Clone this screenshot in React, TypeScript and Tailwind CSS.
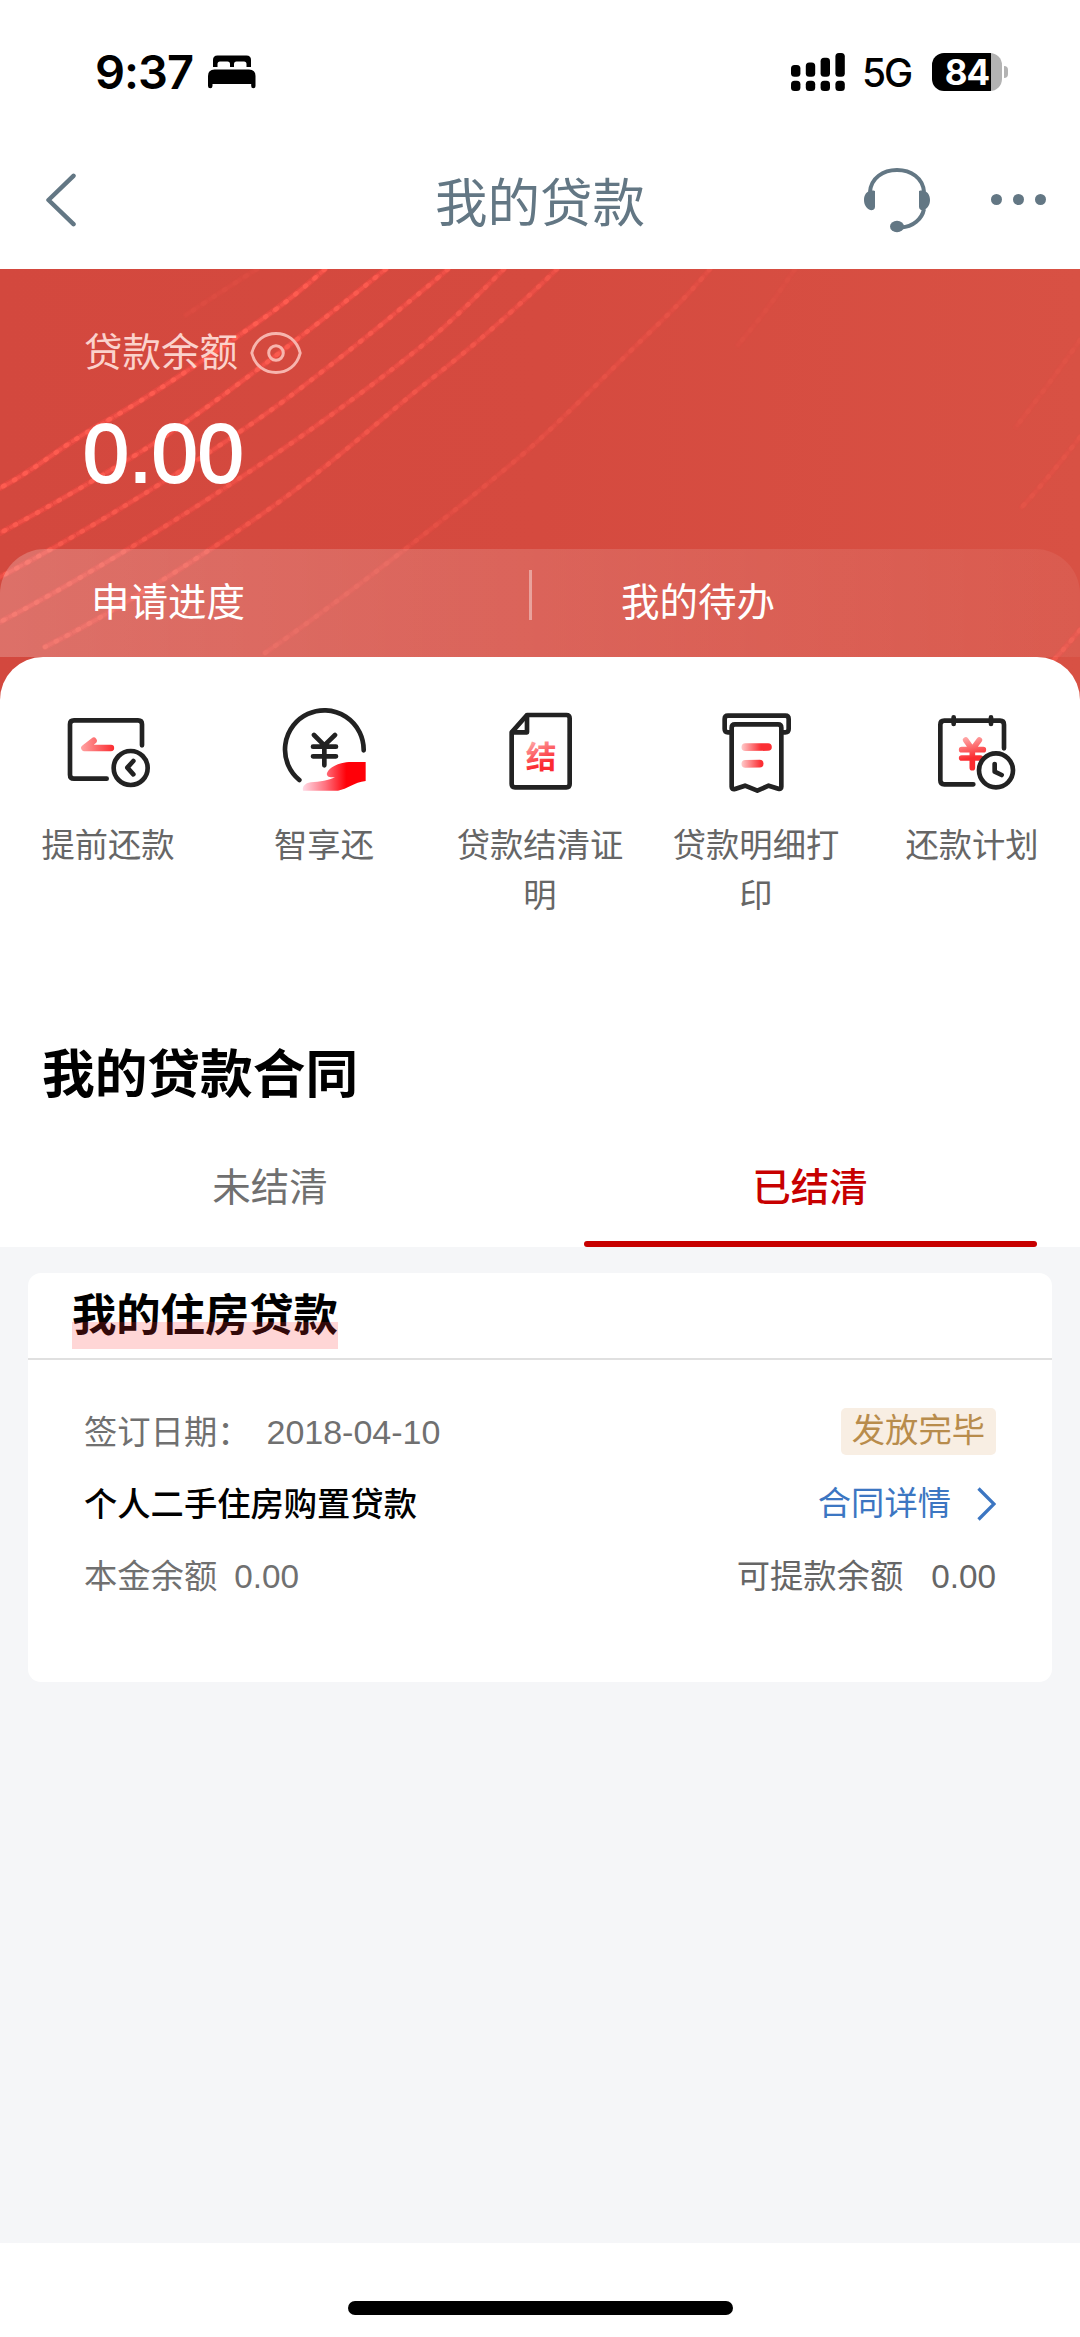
import type { ReactNode } from "react";

const heroLines = [
  { d: "M325 0 C290 32 262 50 241 65 S150 128 103 154 S40 198 0 219", opacity: 1 },
  { d: "M386 0 C355 25 330 45 300 68 S230 122 186 153 S60 232 0 264", opacity: 0.95 },
  { d: "M448 0 C430 16 412 30 393 46 S330 97 289 128 S120 245 0 308", opacity: 0.85 },
  { d: "M504 0 C484 20 466 38 444 58 S370 118 320 154 S130 285 0 353", opacity: 0.75 },
  { d: "M557 0 C520 36 475 76 430 111 S330 197 272 238 S130 335 45 378", opacity: 0.7 },
  { d: "M710 0 C690 24 670 44 647 66 S580 133 540 170 S360 318 265 384", opacity: 0.4 },
  { d: "M257 0 C235 14 210 30 186 46", opacity: 0.2 },
  { d: "M795 0 C775 30 760 50 738 76", opacity: 0.15 },
  { d: "M1080 71 C1060 100 1042 124 1016 158", opacity: 0.2 },
  { d: "M1080 168 C1060 194 1042 216 1022 238", opacity: 0.3 },
  { d: "M1080 361 C1070 373 1064 380 1050 395", opacity: 0.6 },
];

const dark = {
  fill: "none",
  stroke: "#222",
  strokeWidth: 14,
  strokeLinecap: "round" as const,
  strokeLinejoin: "round" as const,
};

const actions = [
  {
    label: "提前还款",
    icon: (
      <>
        <defs>
          <linearGradient id="arrow" gradientUnits="userSpaceOnUse" x1="54" y1="0" x2="153" y2="0">
            <stop offset="0" stopColor="#ffa3a3" />
            <stop offset="1" stopColor="#fb2c30" />
          </linearGradient>
        </defs>
        <path {...dark} d="M131 221 H33 Q21 221 21 209 V58 Q21 46 33 46 H225 Q237 46 237 58 V121" />
        <circle {...dark} cx="203" cy="189" r="51" />
        <path {...dark} d="M211 168 L193 188 L211 208" />
        <path d="M92 107 L64 129 H144" fill="none" stroke="url(#arrow)" strokeWidth="19" strokeLinecap="round" strokeLinejoin="round" />
        <path d="M68 127 L92 108 V127 Z" fill="url(#arrow)" />
      </>
    ),
  },
  {
    label: "智享还",
    icon: (
      <>
        <defs>
          <linearGradient id="hand" gradientUnits="userSpaceOnUse" x1="71" y1="0" x2="225" y2="0">
            <stop offset="0" stopColor="#ffdbe6" />
            <stop offset="0.45" stopColor="#ff6f7c" />
            <stop offset="0.85" stopColor="#ff0008" />
          </linearGradient>
        </defs>
        <path {...dark} d="M61 225 A118 118 0 1 1 254 136" />
        <path {...dark} d="M105 90 L136 121 L168 90 M102 125 H171 M102 154 H171 M136 121 V181" />
        <path
          fill="url(#hand)"
          d="M260 171 H210 C178 173 150 188 144 204 C141 214 152 219 168 216 C150 227 122 230 95 232 C78 234 69 245 72 257 H177 C205 252 225 232 260 228 Z"
        />
      </>
    ),
  },
  {
    label: "贷款结清证明",
    icon: (
      <>
        <defs>
          <linearGradient id="seal" x1="0" y1="0" x2="0.4" y2="1">
            <stop offset="0.15" stopColor="#ff9c9c" />
            <stop offset="0.8" stopColor="#fb2a30" />
          </linearGradient>
        </defs>
        <path {...dark} d="M96 30 H214 Q224 30 224 40 V237 Q224 247 214 247 H60 Q50 247 50 237 V82 Z" />
        <path {...dark} d="M96 32 V82 H52" />
        <text x="138" y="190" textAnchor="middle" fontSize="92" fontWeight="700" fill="url(#seal)">
          结
        </text>
      </>
    ),
  },
  {
    label: "贷款明细打印",
    icon: (
      <>
        <defs>
          <linearGradient id="line" gradientUnits="userSpaceOnUse" x1="92" y1="0" x2="150" y2="0">
            <stop offset="0" stopColor="#ffc9c9" />
            <stop offset="1" stopColor="#fb2e33" />
          </linearGradient>
        </defs>
        <path {...dark} d="M60 82 H51 Q41 82 41 72 V42 Q41 32 51 32 H223 Q233 32 233 42 V72 Q233 82 223 82 H213" />
        <path {...dark} d="M62 68 Q62 58 72 58 H201 Q211 58 211 68 V245 Q211 254 202 251 L173 242 L139 257 L102 242 L72 252 Q62 254 62 245 Z" />
        <path d="M103 126.5 L171 126 M103 176.5 L146 176" fill="none" stroke="url(#line)" strokeWidth="23" strokeLinecap="round" />
      </>
    ),
  },
  {
    label: "还款计划",
    icon: (
      <>
        <defs>
          <linearGradient id="yen" gradientUnits="userSpaceOnUse" x1="120" y1="98" x2="140" y2="185">
            <stop offset="0" stopColor="#ffa5a5" />
            <stop offset="0.7" stopColor="#fb2c30" />
          </linearGradient>
        </defs>
        <path {...dark} d="M139 238 H52 Q40 238 40 226 V59 Q40 47 52 47 H219 Q231 47 231 59 V130" />
        <path {...dark} d="M80 37 V57 M192 37 V57" />
        <path
          d="M116 105 L136 133 L157 105 M104 134 H169 M104 159 H160 M136 133 V188"
          fill="none"
          stroke="url(#yen)"
          strokeWidth="17"
          strokeLinecap="round"
        />
        <circle {...dark} fill="#fff" cx="207" cy="196" r="51" />
        <path {...dark} d="M203 177 V200 L224 210" />
      </>
    ),
  },
];

function StatusBar() {
  return (
    <div className="flex h-[130px] items-center justify-between pr-[72px] pl-[95px] pt-[13px] text-black">
      <div className="flex items-center gap-[14px]">
        <span className="w-[99px] font-[Inter] text-[47px] leading-[50px] font-semibold tracking-[-1px]">9:37</span>
        <svg width="48" height="34" viewBox="0 0 48 34">
          <path d="M5 12 V5 Q5 .5 9.500 .5 H38.500 Q43 .5 43 5 V12 H38.500 V9 Q38.500 6.500 36 6.500 H28.500 Q26 6.500 26 9 V12 H22 V9 Q22 6.500 19.500 6.500 H12 Q9.500 6.500 9.500 9 V12 Z" />
          <path d="M0 31 V21 Q0 14.500 6.500 14.500 H41 Q47.500 14.500 47.500 21 V31 Q47.500 33.300 45.300 33.300 Q43.200 33.300 43.200 31 V29 H4.500 V31 Q4.500 33.300 2.300 33.300 Q0 33.300 0 31 Z" />
        </svg>
      </div>
      <div className="flex items-center">
        <svg width="54" height="38" viewBox="0 0 54 38">
          <rect x="0" y="12" width="9.400" height="11.700" rx="3.500" />
          <rect x="14.800" y="9.500" width="9.400" height="14.200" rx="3.500" />
          <rect x="29.600" y="4.700" width="9.400" height="19" rx="3.500" />
          <rect x="44.400" y="0" width="9.400" height="23.700" rx="3.500" />
          <rect x="0" y="27.700" width="9.400" height="10.300" rx="3.500" />
          <rect x="14.800" y="27.700" width="9.400" height="10.300" rx="3.500" />
          <rect x="29.600" y="27.700" width="9.400" height="10.300" rx="3.500" />
          <rect x="44.400" y="27.700" width="9.400" height="10.300" rx="3.500" />
        </svg>
        <span className="mt-[3px] ml-[17px] w-[70px] font-[Inter] text-[39px] leading-[40px] font-medium tracking-[-2px]">5G</span>
        <div className="flex h-[38px] w-[70px] items-center justify-center rounded-[12px] bg-[linear-gradient(90deg,#000_59px,#b3b3b3_59px)] font-[Inter] text-[35px] leading-[38px] font-bold tracking-[-1px] text-white">
          84
        </div>
        <div className="ml-[2px] h-[12px] w-[4px] rounded-r-full bg-[#b3b3b3]" />
      </div>
    </div>
  );
}

function Header() {
  return (
    <header className="flex h-[139px] items-center text-[#637784]">
      <div className="flex w-[300px] pl-[45px]">
        <svg width="33" height="54" viewBox="0 0 33 54" fill="none" stroke="currentColor" strokeWidth="4.500" strokeLinecap="round" strokeLinejoin="round">
          <path d="M28.500 2.800 L3.500 27 L28.500 51.200" />
        </svg>
      </div>
      <h1 className="flex-1 pt-[8px] text-center text-[52.500px] leading-[60px]">我的贷款</h1>
      <div className="flex w-[300px] items-center pl-[83px]">
        <svg width="68" height="66" viewBox="0 0 68 66" fill="none" stroke="currentColor" strokeWidth="4">
          <path d="M7 25 C8 11 20 3 34 3 S60 11 61 25" />
          <path d="M61 42 C59 52 50 60 38 60.500" />
          <path d="M12 24 C5 22 1 27 1 33 S5 44 10 43 Q12 42 12 40 Z M56 24 C63 22 67 27 67 33 S63 44 58 43 Q56 42 56 40 Z" fill="currentColor" stroke="none" />
          <ellipse cx="34" cy="59.500" rx="7" ry="5.700" fill="currentColor" stroke="none" />
        </svg>
        <div className="ml-[60px] flex gap-[11px]">
          <i className="size-[11px] rounded-full bg-current" />
          <i className="size-[11px] rounded-full bg-current" />
          <i className="size-[11px] rounded-full bg-current" />
        </div>
      </div>
    </header>
  );
}

function Balance() {
  return (
    <section className="relative h-[436px] bg-linear-to-r from-[#d3483e] via-[#d54a3f] to-[#d85144] text-white">
      <svg className="absolute inset-0" width="1080" height="436" viewBox="0 0 1080 436" fill="none">
        {heroLines.map((line) => (
          <g key={line.d} opacity={line.opacity} strokeLinecap="round">
            <path d={line.d} stroke="#ee4b44" strokeWidth="6" opacity="0.6" />
            <path d={line.d} stroke="#ff6152" strokeWidth="4.500" strokeDasharray="1.500 11" opacity="0.9" />
            <path d={line.d} stroke="#ff5a50" strokeWidth="3.500" strokeDasharray="6 4" opacity="0.55" />
          </g>
        ))}
      </svg>
      <div className="relative flex h-[280px] flex-col pt-[61px] pl-[84px]">
        <div className="flex items-center gap-[12px] text-[#fbd2cc]">
          <span className="text-[38.500px] leading-[46px]">贷款余额</span>
          <svg width="52" height="42" viewBox="0 0 52 42" fill="none" stroke="#f7b5ae" strokeWidth="3">
            <path d="M1.800 21 C5 8 15 1.500 26 1.500 S47 8 50.200 21 C47 34 37 40.500 26 40.500 S5 34 1.800 21 Z" />
            <circle cx="26" cy="21" r="7.300" />
          </svg>
        </div>
        <p className="mt-[32px] -ml-px text-[82.500px] leading-[90px] [-webkit-text-stroke:2px_white]">0.00</p>
      </div>
      <div className="relative flex h-[108px] rounded-t-[45px] bg-linear-to-r from-white/22 via-white/14 to-white/6 text-[38.500px] leading-[108px]">
        <span className="w-[529px] pl-[91px]">申请进度</span>
        <i className="mt-[21px] h-[50px] w-[3px] bg-white/40" />
        <span className="pl-[89px]">我的待办</span>
      </div>
    </section>
  );
}

function Actions() {
  return (
    <div className="grid h-[358px] grid-cols-5 pt-[48px]">
      {actions.map((action) => (
        <div key={action.label} className="flex flex-col items-center">
          <svg width="90" height="90" viewBox="0 0 270 270">
            {action.icon}
          </svg>
          <span className="mt-[26px] w-[170px] text-center text-[33.300px] leading-[50px] text-[#666]">{action.label}</span>
        </div>
      ))}
    </div>
  );
}

function Row({ children }: { children: ReactNode }) {
  return <div className="flex h-[72px] items-center justify-between">{children}</div>;
}

function Contracts() {
  return (
    <section className="flex-1 bg-[#f5f6f8] px-[28px] pt-[26px]">
      <div className="h-[409px] rounded-[13px] bg-white">
        <div className="flex h-[87px] border-b-[2px] border-[#e0e0e0] pl-[44px]">
          <h3 className="relative h-[76px] text-[44.300px] leading-[86px] font-bold text-black">
            我的住房贷款
            <i className="absolute inset-x-0 bottom-0 h-[27px] bg-[#ff3333]/20" />
          </h3>
        </div>
        <div className="pt-[36px] pr-[56px] pl-[56px] text-[33.300px] leading-[46px] text-[#707070]">
          <Row>
            <span>
              签订日期：<span className="ml-[16px] text-[34px]">2018-04-10</span>
            </span>
            <span className="mb-[2px] h-[47px] rounded-[5px] bg-[#f8eee3] px-[11px] text-[#b88c4c]">发放完毕</span>
          </Row>
          <Row>
            <span className="pt-[2px] font-medium text-black">个人二手住房购置贷款</span>
            <span className="flex items-center text-[#3c76c2]">
              合同详情
              <svg className="ml-[26px]" width="19" height="34" viewBox="0 0 19 34" fill="none" stroke="currentColor" strokeWidth="3.300">
                <path d="M1.500 1.500 L17 17 L1.500 32.500" />
              </svg>
            </span>
          </Row>
          <Row>
            <span className="pt-[2px]">
              本金余额<span className="ml-[17px]">0.00</span>
            </span>
            <span className="pt-[2px] text-[#666]">
              可提款余额<span className="ml-[28px]">0.00</span>
            </span>
          </Row>
        </div>
      </div>
    </section>
  );
}

export default function App() {
  return (
    <main className="flex h-[2337px] w-[1080px] flex-col overflow-hidden bg-white font-['Liberation_Sans','Noto_Sans_CJK_SC',sans-serif]">
      <StatusBar />
      <Header />
      <Balance />
      <div className="relative -mt-[48px] h-[590px] rounded-t-[43px] bg-white">
        <Actions />
        <h2 className="pl-[42px] text-[52.700px] leading-[120px] font-bold text-black">我的贷款合同</h2>
        <div className="grid h-[112px] grid-cols-2 text-center text-[38.500px] leading-[106px]">
          <span className="text-[#707070]">未结清</span>
          <span className="flex flex-col items-center font-medium text-[#c70000]">
            已结清
            <i className="h-[6px] w-[453px] rounded-full bg-[#c70000]" />
          </span>
        </div>
      </div>
      <Contracts />
      <footer className="flex h-[94px] justify-center pt-[58px]">
        <i className="h-[14px] w-[385px] rounded-full bg-black" />
      </footer>
    </main>
  );
}
